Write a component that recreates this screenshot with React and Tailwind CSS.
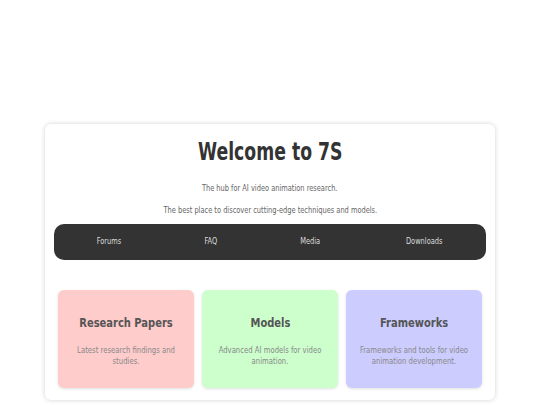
export default function App() {
  const cards = [
    { title: "Research Papers", text: "Latest research findings and studies.", bg: "bg-[#ffcccc]" },
    { title: "Models", text: "Advanced AI models for video animation.", bg: "bg-[#ccffcc]" },
    { title: "Frameworks", text: "Frameworks and tools for video animation development.", bg: "bg-[#ccccff]" },
  ];
  const links = ["Forums", "FAQ", "Media", "Downloads"];

  return (
    <div className="min-h-screen bg-white pt-[124px] px-[45px] font-['DejaVu_Sans_Condensed','DejaVu_Sans',sans-serif]">
      <div className="w-[450px] bg-white rounded-[6px] shadow-[0_0_5px_rgba(0,0,0,0.18)] px-[9px] pt-[13px] pb-[12px]">
        <h1 className="text-center text-[24px] leading-[30px] font-bold text-[#333]">
          <span className="inline-block scale-x-[0.8]">Welcome to 7S</span>
        </h1>
        <p className="mt-[15px] text-center text-[9px] leading-[12px] text-[#666]">
          <span className="inline-block scale-x-[0.82]">The hub for AI video animation research.</span>
        </p>
        <p className="mt-[10px] text-center text-[9px] leading-[12px] text-[#666]">
          <span className="inline-block scale-x-[0.82]">The best place to discover cutting-edge techniques and models.</span>
        </p>

        {/* nav */}
        <nav className="mt-[8px] h-[36px] rounded-[10px] bg-[#333] flex items-center justify-around">
          {links.map((l) => (
            <a key={l} className="text-[9px] text-[#ddd]">
              <span className="inline-block scale-x-[0.82]">{l}</span>
            </a>
          ))}
        </nav>

        {/* sections */}
        <div className="mt-[30px] px-[4px] grid grid-cols-3 gap-[8px]">
          {cards.map((c) => (
            <div key={c.title} className={`${c.bg} h-[98px] rounded-[6px] shadow-[0_1px_3px_rgba(0,0,0,0.12)] flex flex-col items-center pt-[25px]`}>
              <h2 className="text-[13px] leading-[16px] font-bold text-[#555]">
                <span className="inline-block scale-x-[0.85]">{c.title}</span>
              </h2>
              <p className="mt-[14px] w-[130px] text-center text-[9px] leading-[11px] text-[#888]">
                <span className="inline-block scale-x-[0.85]">{c.text}</span>
              </p>
            </div>
          ))}
        </div>
      </div>
    </div>
  );
}
